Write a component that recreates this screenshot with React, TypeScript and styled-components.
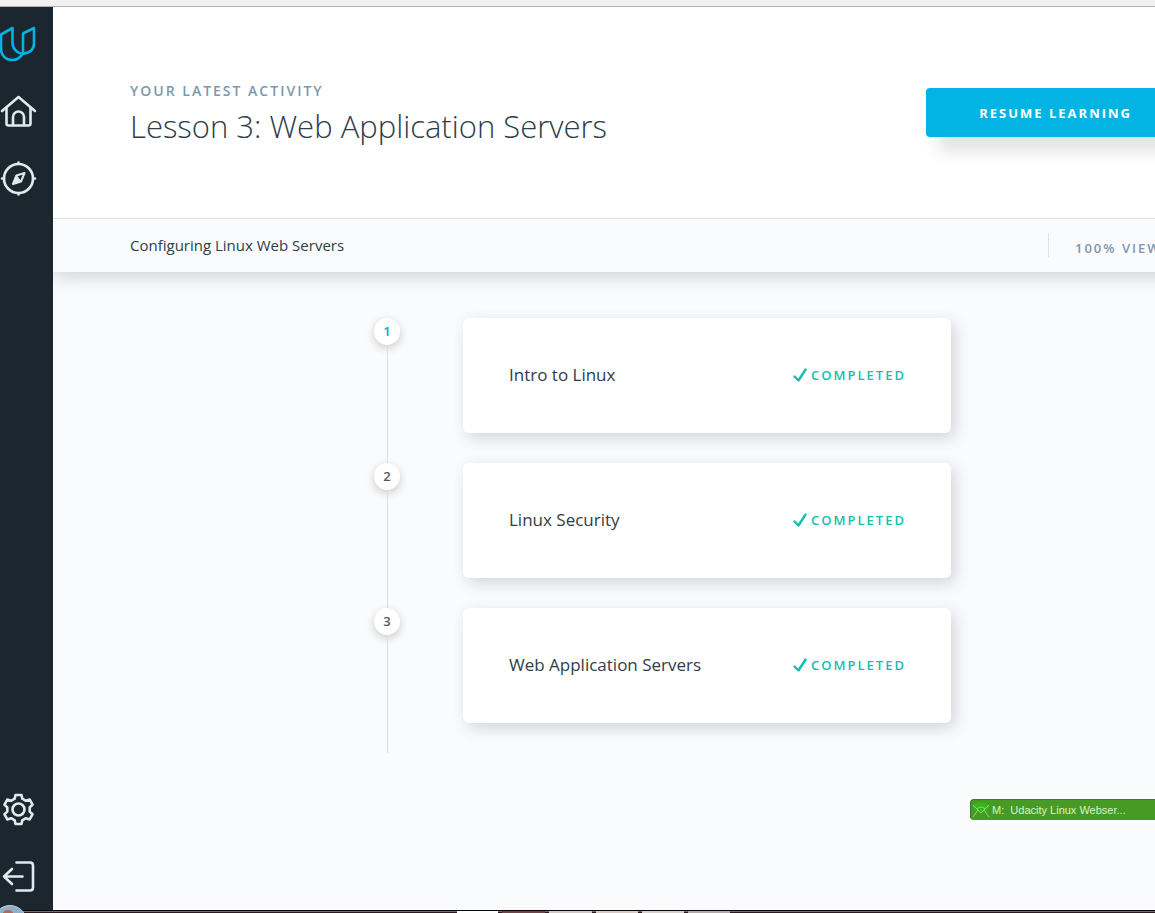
import React from "react";
import styled, { createGlobalStyle } from "styled-components";

const GlobalStyle = createGlobalStyle`
  *, *::before, *::after { box-sizing: border-box; }
  body { margin: 0; background: #fafbfd; font-family: "Open Sans", sans-serif; color: #2e3d49; }
  h1, h2, h3, p, ol { margin: 0; padding: 0; }
`;

const Page = styled.div`
  position: relative;
  display: flex;
  flex-direction: column;
  min-height: 100vh;
  overflow: hidden;
`;

const WindowEdge = styled.div`
  height: 7px;
  background: #f1f1f1;
  border-bottom: 1px solid #b2b2b2;
`;

const Body = styled.div`
  display: flex;
  flex: 1;
`;

const Sidebar = styled.nav`
  display: flex;
  flex-direction: column;
  justify-content: space-between;
  width: 53px;
  flex-shrink: 0;
  padding: 17px 0 13px;
  background: #1c262f;
`;

const NavGroup = styled.div`
  display: flex;
  flex-direction: column;
  gap: 27px;
`;

const NavLink = styled.a`
  display: block;
  width: 40px;
  height: 40px;
  color: #dfe9ee;

  svg {
    display: block;
    fill: none;
    stroke: currentColor;
    stroke-width: 2.6;
    stroke-linecap: round;
    stroke-linejoin: round;
  }
`;

const Main = styled.main`
  display: flex;
  flex-direction: column;
  flex: 1;
  min-width: 0;
  overflow: hidden;
`;

const Hero = styled.header`
  position: relative;
  display: flex;
  justify-content: space-between;
  align-items: flex-start;
  height: 211px;
  padding: 74px 0 0 77px;
  background: #fff;
`;

const Eyebrow = styled.p`
  margin-bottom: 3px;
  font-size: 14px;
  font-weight: 600;
  line-height: 20px;
  letter-spacing: 2px;
  text-transform: uppercase;
  color: #7d97ad;
`;

const Title = styled.h1`
  font-size: 31px;
  font-weight: 300;
  line-height: 44px;
  white-space: nowrap;
`;

const ResumeButton = styled.button`
  height: 49px;
  margin: 7px -30px 0 0;
  padding: 0 53px;
  border: 0;
  border-radius: 4px;
  background: #02b3e4;
  box-shadow: 12px 15px 16px rgba(0, 0, 0, 0.11);
  color: #fff;
  font: 700 13px/20px "Open Sans", sans-serif;
  letter-spacing: 2px;
  text-transform: uppercase;
  white-space: nowrap;
`;

const CourseBar = styled.section`
  display: flex;
  justify-content: space-between;
  align-items: center;
  height: 54px;
  margin-right: -40px;
  padding: 0 0 2px 77px;
  border-top: 1px solid #dbe2e8;
  background: #fafbfd;
  box-shadow: 0 4px 20px rgba(0, 0, 0, 0.18);
`;

const CourseName = styled.h2`
  font-size: 15px;
  font-weight: 400;
  line-height: 24px;
`;

const Viewed = styled.p`
  width: 147px;
  height: 24px;
  padding: 4px 0 0 26px;
  border-left: 1px solid #dbe2e8;
  font-size: 13px;
  font-weight: 600;
  line-height: 22px;
  letter-spacing: 2px;
  white-space: nowrap;
  color: #7d97ad;
`;

const Lessons = styled.ol`
  align-self: center;
  width: 694px;
  margin-top: 46px;
  padding-left: 117px;
  list-style: none;
`;

const Lesson = styled.li`
  display: grid;
  grid-template-columns: 26px 1fr;
  column-gap: 63px;
`;

const Track = styled.div`
  display: flex;
  flex-direction: column;
  align-items: center;

  &::after {
    content: "";
    flex: 1;
    width: 1px;
    background: #dbdfe5;
  }
`;

const Step = styled.span<{ $active: boolean }>`
  width: 26px;
  height: 27px;
  border-radius: 50%;
  background: #fff;
  box-shadow: 0 3px 10px rgba(0, 0, 0, 0.2);
  color: ${(p) => (p.$active ? "#02a3d8" : "#4f5861")};
  font-size: 13px;
  font-weight: 600;
  line-height: 27px;
  text-align: center;
`;

const Card = styled.article`
  display: flex;
  justify-content: space-between;
  align-items: center;
  height: 115px;
  margin-bottom: 30px;
  padding: 0 45px 1px 46px;
  border-radius: 6px;
  background: #fff;
  box-shadow: 4px 5px 16px rgba(46, 61, 73, 0.2);
`;

const LessonName = styled.h3`
  font-size: 17px;
  font-weight: 400;
  line-height: 24px;
`;

const Status = styled.p`
  display: flex;
  align-items: center;
  gap: 4px;
  color: #15beaf;
  font-size: 13px;
  font-weight: 600;
  line-height: 20px;
  letter-spacing: 2px;
  text-transform: uppercase;
`;

const MailTab = styled.aside`
  position: absolute;
  right: 0;
  bottom: 93px;
  display: flex;
  align-items: center;
  gap: 2px;
  width: 185px;
  height: 21px;
  padding-left: 1px;
  border-top: 1px solid #477042;
  border-left: 1px solid #477042;
  border-radius: 4px 0 0 4px;
  background: #479b25;
  color: #d5f6c4;
  font: 11px/20px "Liberation Sans", sans-serif;
  white-space: pre;
`;

const Taskbar = styled.footer`
  display: flex;
  gap: 4px;
  height: 3px;
  padding-left: 457px;
  border-top: 1px solid #08060b;
  background: linear-gradient(#766c70 50%, #301820 50%);
`;

const Task = styled.div<{ $tone: string; $width: number }>`
  width: ${(p) => p.$width}px;
  background: ${(p) => p.$tone};
`;

const Orb = styled.svg`
  position: absolute;
  left: 0;
  bottom: 0;
`;

const tasks = [
  { width: 41, tone: "#ffffff" },
  { width: 43, tone: "#704348" },
  { width: 43, tone: "#d5c7c3" },
  { width: 42, tone: "#d9c9c0" },
  { width: 42, tone: "#d8cfcb" },
  { width: 42, tone: "#b5a7a9" },
];

const lessons = ["Intro to Linux", "Linux Security", "Web Application Servers"];

export default function App() {
  return (
    <Page>
      <GlobalStyle />
      <WindowEdge />
      <Body>
        <Sidebar aria-label="Main">
          <NavGroup>
            <NavLink href="#" aria-label="Udacity">
              <svg width="40" height="40" viewBox="0 0 40 40">
                <g stroke="#02b3e4">
                  <path d="M1 10.500 12.500 4v14c0 7 4.500 11.500 10.500 11.500C20 34 16.500 36 12.500 36 5.500 36 1 31.500 1 24.500Z" />
                  <path d="M23 29.500V9.500L34 4v15.500c0 6-4.500 10-11 10Z" />
                </g>
              </svg>
            </NavLink>
            <NavLink href="#" aria-label="Home">
              <svg width="40" height="40" viewBox="0 0 40 40">
                <path d="M2 20 18.500 6 35 20" />
                <path d="M6.500 17v15.500q0 2 2 2h20q2 0 2-2V17" />
                <path d="M13 34v-8a5.500 5.500 0 0 1 11 0v8" />
              </svg>
            </NavLink>
            <NavLink href="#" aria-label="Catalog">
              <svg width="40" height="40" viewBox="0 0 40 40">
                <circle cx="18.500" cy="20.500" r="14.500" />
                <path d="M18.500 4.500v1M18.500 35.500v1M2 20.500h2M33 20.500h2" />
                <path d="M24.500 15 21 23.500 13 26 16.500 17.500Z" strokeWidth="2" />
                <path d="M16.500 17.500 21 23.500 13 26Z" fill="currentColor" strokeWidth="1" />
              </svg>
            </NavLink>
          </NavGroup>
          <NavGroup>
            <NavLink href="#" aria-label="Settings">
              <svg width="40" height="40" viewBox="0 0 40 40">
                <g transform="translate(18.500 19.500)">
                  <path d="M-3.800-10.800-3-14.500H3L3.800-10.800 7.400-8.700 11.200-9.900 14-4.800 11.200-2.100V2.100L14 4.800 11.200 9.900 7.400 8.700 3.800 10.800 3 14.500H-3L-3.800 10.800-7.400 8.700-11.200 9.900-14 4.800-11.200 2.100V-2.100L-14-4.800-11.200-9.900-7.400-8.700Z" />
                  <circle r="6" />
                </g>
              </svg>
            </NavLink>
            <NavLink href="#" aria-label="Log out">
              <svg width="40" height="40" viewBox="0 0 40 40">
                <path d="M16.500 5.500H30q3 0 3 3v22q0 3-3 3H16.500" />
                <path d="M22.500 19.500H4M12 12 4 19.500l8 7.500" />
              </svg>
            </NavLink>
          </NavGroup>
        </Sidebar>
        <Main>
          <Hero>
            <div>
              <Eyebrow>Your latest activity</Eyebrow>
              <Title>Lesson 3: Web Application Servers</Title>
            </div>
            <ResumeButton type="button">Resume learning</ResumeButton>
          </Hero>
          <CourseBar>
            <CourseName>Configuring Linux Web Servers</CourseName>
            <Viewed>100% VIEW</Viewed>
          </CourseBar>
          <Lessons>
            {lessons.map((name, i) => (
              <Lesson key={name}>
                <Track>
                  <Step $active={i === 0}>{i + 1}</Step>
                </Track>
                <Card>
                  <LessonName>{name}</LessonName>
                  <Status>
                    <svg width="14" height="16" viewBox="0 0 14 16" fill="none" stroke="currentColor" strokeWidth="2.400" strokeLinecap="round" strokeLinejoin="round" aria-hidden="true">
                      <path d="M1.500 9.500 5.500 13.500 12.500 2.500" />
                    </svg>
                    Completed
                  </Status>
                </Card>
              </Lesson>
            ))}
          </Lessons>
        </Main>
      </Body>
      <Taskbar>
        {tasks.map((task, i) => (
          <Task key={i} $tone={task.tone} $width={task.width} />
        ))}
      </Taskbar>
      <Orb width="26" height="8" viewBox="0 0 26 8" aria-hidden="true">
        <circle cx="10" cy="17" r="16.500" fill="#8fafc8" stroke="#c0d3e1" />
        <ellipse cx="8" cy="8" rx="5" ry="3" fill="#b96850" />
      </Orb>
      <MailTab>
        <svg width="18" height="18" viewBox="0 0 18 18" fill="none" stroke="#83dc69" aria-hidden="true">
          <ellipse cx="9" cy="6" rx="8" ry="5" fill="#36b51e" stroke="none" />
          <path d="m1 4 8 8 8-8M1 16l5-7M17 16l-5-7M5 8q4-4 8 0" />
        </svg>
        {"M:  Udacity Linux Webser..."}
      </MailTab>
    </Page>
  );
}
